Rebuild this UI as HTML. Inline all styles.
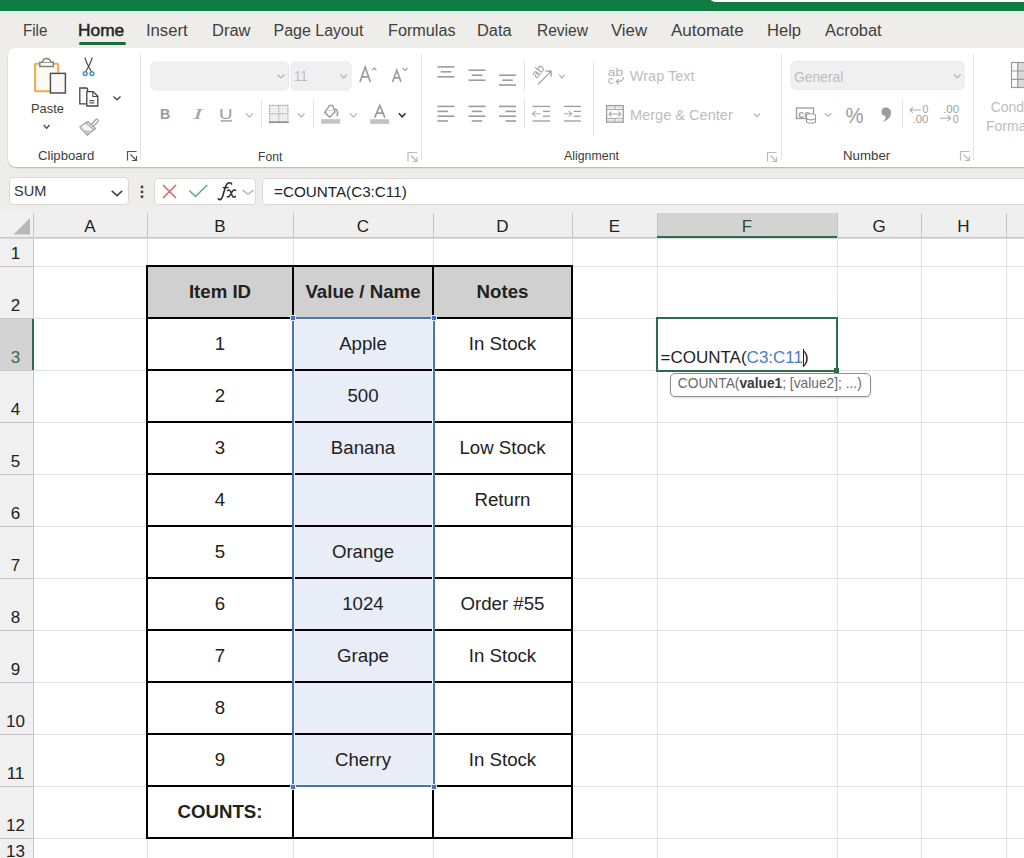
<!DOCTYPE html><html><head><meta charset="utf-8"><style>
*{margin:0;padding:0;box-sizing:border-box}
html,body{width:1024px;height:858px;overflow:hidden;background:#eeede9;font-family:"Liberation Sans",sans-serif;}
.a{position:absolute}
.t{position:absolute;white-space:nowrap;line-height:1}
</style></head><body>

<div class="a" style="left:0;top:0;width:1024px;height:11px;background:#107c41"></div>
<div class="a" style="left:0;top:11px;width:1024px;height:2px;background:#e4f3e8"></div>
<div class="a" style="left:710px;top:-8px;width:330px;height:10px;background:#fff;border-radius:5px"></div>
<div class="a" style="left:8px;top:48px;width:1030px;height:119px;background:#fff;border-radius:8px;box-shadow:0 1px 1.5px rgba(0,0,0,.25)"></div>
<div class="a" style="left:9px;top:177px;width:120px;height:28px;background:#fff;border:1px solid #dcdad8;border-radius:4px"></div>
<div class="a" style="left:154px;top:178px;width:102px;height:27px;background:#fff;border:1px solid #dcdad8;border-radius:4px"></div>
<div class="a" style="left:262px;top:178px;width:780px;height:27px;background:#fff;border:1px solid #dcdad8;border-radius:4px"></div>
<div class="a" style="left:0;top:213px;width:1024px;height:645px;background:#fff"></div>
<div class="a" style="left:0;top:207px;width:1024px;height:30px;background:#efefef"></div>
<div class="a" style="left:0;top:213px;width:33px;height:645px;background:#f0f0f0"></div>
<div class="a" style="left:657px;top:213px;width:180px;height:24px;background:#d3d3d3"></div>
<div class="a" style="left:657px;top:236px;width:180px;height:2px;background:#2b6e4b"></div>
<div class="a" style="left:0;top:319px;width:33px;height:51px;background:#d3d3d3"></div>
<div class="a" style="left:32px;top:319px;width:2px;height:51px;background:#217346"></div>
<div class="a" style="left:33px;top:266px;width:1000px;height:1px;background:#e1e1e1"></div>
<div class="a" style="left:0;top:266px;width:33px;height:1px;background:#c6c6c6"></div>
<div class="a" style="left:33px;top:318px;width:1000px;height:1px;background:#e1e1e1"></div>
<div class="a" style="left:0;top:318px;width:33px;height:1px;background:#c6c6c6"></div>
<div class="a" style="left:33px;top:370px;width:1000px;height:1px;background:#e1e1e1"></div>
<div class="a" style="left:0;top:370px;width:33px;height:1px;background:#c6c6c6"></div>
<div class="a" style="left:33px;top:422px;width:1000px;height:1px;background:#e1e1e1"></div>
<div class="a" style="left:0;top:422px;width:33px;height:1px;background:#c6c6c6"></div>
<div class="a" style="left:33px;top:474px;width:1000px;height:1px;background:#e1e1e1"></div>
<div class="a" style="left:0;top:474px;width:33px;height:1px;background:#c6c6c6"></div>
<div class="a" style="left:33px;top:526px;width:1000px;height:1px;background:#e1e1e1"></div>
<div class="a" style="left:0;top:526px;width:33px;height:1px;background:#c6c6c6"></div>
<div class="a" style="left:33px;top:578px;width:1000px;height:1px;background:#e1e1e1"></div>
<div class="a" style="left:0;top:578px;width:33px;height:1px;background:#c6c6c6"></div>
<div class="a" style="left:33px;top:630px;width:1000px;height:1px;background:#e1e1e1"></div>
<div class="a" style="left:0;top:630px;width:33px;height:1px;background:#c6c6c6"></div>
<div class="a" style="left:33px;top:682px;width:1000px;height:1px;background:#e1e1e1"></div>
<div class="a" style="left:0;top:682px;width:33px;height:1px;background:#c6c6c6"></div>
<div class="a" style="left:33px;top:734px;width:1000px;height:1px;background:#e1e1e1"></div>
<div class="a" style="left:0;top:734px;width:33px;height:1px;background:#c6c6c6"></div>
<div class="a" style="left:33px;top:786px;width:1000px;height:1px;background:#e1e1e1"></div>
<div class="a" style="left:0;top:786px;width:33px;height:1px;background:#c6c6c6"></div>
<div class="a" style="left:33px;top:838px;width:1000px;height:1px;background:#e1e1e1"></div>
<div class="a" style="left:0;top:838px;width:33px;height:1px;background:#c6c6c6"></div>
<div class="a" style="left:147px;top:238px;width:1px;height:700px;background:#e1e1e1"></div>
<div class="a" style="left:147px;top:213px;width:1px;height:24px;background:#c6c6c6"></div>
<div class="a" style="left:293px;top:238px;width:1px;height:700px;background:#e1e1e1"></div>
<div class="a" style="left:293px;top:213px;width:1px;height:24px;background:#c6c6c6"></div>
<div class="a" style="left:433px;top:238px;width:1px;height:700px;background:#e1e1e1"></div>
<div class="a" style="left:433px;top:213px;width:1px;height:24px;background:#c6c6c6"></div>
<div class="a" style="left:572px;top:238px;width:1px;height:700px;background:#e1e1e1"></div>
<div class="a" style="left:572px;top:213px;width:1px;height:24px;background:#c6c6c6"></div>
<div class="a" style="left:657px;top:238px;width:1px;height:700px;background:#e1e1e1"></div>
<div class="a" style="left:657px;top:213px;width:1px;height:24px;background:#c6c6c6"></div>
<div class="a" style="left:837px;top:238px;width:1px;height:700px;background:#e1e1e1"></div>
<div class="a" style="left:837px;top:213px;width:1px;height:24px;background:#c6c6c6"></div>
<div class="a" style="left:921px;top:238px;width:1px;height:700px;background:#e1e1e1"></div>
<div class="a" style="left:921px;top:213px;width:1px;height:24px;background:#c6c6c6"></div>
<div class="a" style="left:1006px;top:238px;width:1px;height:700px;background:#e1e1e1"></div>
<div class="a" style="left:1006px;top:213px;width:1px;height:24px;background:#c6c6c6"></div>
<div class="a" style="left:0;top:237px;width:1024px;height:1px;background:#c4c4c4"></div>
<div class="a" style="left:0;top:238px;width:1024px;height:1px;background:#dcdcdc"></div>
<div class="a" style="left:33px;top:213px;width:1px;height:700px;background:#c6c6c6"></div>
<div class="a" style="left:657px;top:236px;width:180px;height:2px;background:#2b6e4b"></div>
<div class="a" style="left:32px;top:319px;width:2px;height:51px;background:#2b6e4b"></div>
<svg class="a" style="left:0;top:212px" width="33" height="26"><path d="M13.5 22.5 L30 22.5 L30 6 Z" fill="#b8b8b8"/></svg>
<div class="t" style="left:70.0px;width:40px;text-align:center;top:218px;font-size:17px;color:#222">A</div>
<div class="t" style="left:200.0px;width:40px;text-align:center;top:218px;font-size:17px;color:#222">B</div>
<div class="t" style="left:343.0px;width:40px;text-align:center;top:218px;font-size:17px;color:#222">C</div>
<div class="t" style="left:482.5px;width:40px;text-align:center;top:218px;font-size:17px;color:#222">D</div>
<div class="t" style="left:594.5px;width:40px;text-align:center;top:218px;font-size:17px;color:#222">E</div>
<div class="t" style="left:727.0px;width:40px;text-align:center;top:218px;font-size:17px;color:#2a4d39">F</div>
<div class="t" style="left:859.0px;width:40px;text-align:center;top:218px;font-size:17px;color:#222">G</div>
<div class="t" style="left:943.5px;width:40px;text-align:center;top:218px;font-size:17px;color:#222">H</div>
<div class="t" style="left:-0.5px;width:32px;text-align:center;top:245px;font-size:17px;color:#222">1</div>
<div class="t" style="left:-0.5px;width:32px;text-align:center;top:297px;font-size:17px;color:#222">2</div>
<div class="t" style="left:-0.5px;width:32px;text-align:center;top:349px;font-size:17px;color:#3a6b4f">3</div>
<div class="t" style="left:-0.5px;width:32px;text-align:center;top:401px;font-size:17px;color:#222">4</div>
<div class="t" style="left:-0.5px;width:32px;text-align:center;top:453px;font-size:17px;color:#222">5</div>
<div class="t" style="left:-0.5px;width:32px;text-align:center;top:505px;font-size:17px;color:#222">6</div>
<div class="t" style="left:-0.5px;width:32px;text-align:center;top:557px;font-size:17px;color:#222">7</div>
<div class="t" style="left:-0.5px;width:32px;text-align:center;top:609px;font-size:17px;color:#222">8</div>
<div class="t" style="left:-0.5px;width:32px;text-align:center;top:661px;font-size:17px;color:#222">9</div>
<div class="t" style="left:-0.5px;width:32px;text-align:center;top:713px;font-size:17px;color:#222">10</div>
<div class="t" style="left:-0.5px;width:32px;text-align:center;top:765px;font-size:17px;color:#222">11</div>
<div class="t" style="left:-0.5px;width:32px;text-align:center;top:817px;font-size:17px;color:#222">12</div>
<div class="t" style="left:-0.5px;width:32px;text-align:center;top:843px;font-size:17px;color:#222">13</div>
<div class="a" style="left:147px;top:266px;width:425px;height:52px;background:#d0d0d0"></div>
<div class="a" style="left:294px;top:318px;width:139px;height:468px;background:#e8edf7"></div>
<div class="a" style="left:146px;top:265px;width:2px;height:574px;background:#000"></div>
<div class="a" style="left:292px;top:265px;width:2px;height:574px;background:#000"></div>
<div class="a" style="left:432px;top:265px;width:2px;height:574px;background:#000"></div>
<div class="a" style="left:571px;top:265px;width:2px;height:574px;background:#000"></div>
<div class="a" style="left:146px;top:265px;width:427px;height:2px;background:#000"></div>
<div class="a" style="left:146px;top:317px;width:427px;height:2px;background:#000"></div>
<div class="a" style="left:146px;top:369px;width:427px;height:2px;background:#000"></div>
<div class="a" style="left:146px;top:421px;width:427px;height:2px;background:#000"></div>
<div class="a" style="left:146px;top:473px;width:427px;height:2px;background:#000"></div>
<div class="a" style="left:146px;top:525px;width:427px;height:2px;background:#000"></div>
<div class="a" style="left:146px;top:577px;width:427px;height:2px;background:#000"></div>
<div class="a" style="left:146px;top:629px;width:427px;height:2px;background:#000"></div>
<div class="a" style="left:146px;top:681px;width:427px;height:2px;background:#000"></div>
<div class="a" style="left:146px;top:733px;width:427px;height:2px;background:#000"></div>
<div class="a" style="left:146px;top:785px;width:427px;height:2px;background:#000"></div>
<div class="a" style="left:146px;top:837px;width:427px;height:2px;background:#000"></div>
<div class="a" style="left:292px;top:317px;width:143px;height:470px;border:2px solid #4b74ae;box-shadow:inset 0 0 0 1px #f2f5fa"></div>
<div class="a" style="left:290px;top:315px;width:6px;height:6px;background:#4b74ae;border:1px solid #dfe8f5"></div>
<div class="a" style="left:431px;top:315px;width:6px;height:6px;background:#4b74ae;border:1px solid #dfe8f5"></div>
<div class="a" style="left:290px;top:784px;width:6px;height:6px;background:#4b74ae;border:1px solid #dfe8f5"></div>
<div class="a" style="left:431px;top:784px;width:6px;height:6px;background:#4b74ae;border:1px solid #dfe8f5"></div>
<div class="t" style="left:147px;width:146px;text-align:center;top:283px;font-size:18.67px;font-weight:bold;color:#222">Item ID</div>
<div class="t" style="left:293px;width:140px;text-align:center;top:283px;font-size:18.67px;font-weight:bold;color:#222">Value / Name</div>
<div class="t" style="left:433px;width:139px;text-align:center;top:283px;font-size:18.67px;font-weight:bold;color:#222">Notes</div>
<div class="t" style="left:147px;width:146px;text-align:center;top:335px;font-size:18.67px;font-weight:normal;color:#222">1</div>
<div class="t" style="left:293px;width:140px;text-align:center;top:335px;font-size:18.67px;font-weight:normal;color:#222">Apple</div>
<div class="t" style="left:433px;width:139px;text-align:center;top:335px;font-size:18.67px;font-weight:normal;color:#222">In Stock</div>
<div class="t" style="left:147px;width:146px;text-align:center;top:387px;font-size:18.67px;font-weight:normal;color:#222">2</div>
<div class="t" style="left:293px;width:140px;text-align:center;top:387px;font-size:18.67px;font-weight:normal;color:#222">500</div>
<div class="t" style="left:147px;width:146px;text-align:center;top:439px;font-size:18.67px;font-weight:normal;color:#222">3</div>
<div class="t" style="left:293px;width:140px;text-align:center;top:439px;font-size:18.67px;font-weight:normal;color:#222">Banana</div>
<div class="t" style="left:433px;width:139px;text-align:center;top:439px;font-size:18.67px;font-weight:normal;color:#222">Low Stock</div>
<div class="t" style="left:147px;width:146px;text-align:center;top:491px;font-size:18.67px;font-weight:normal;color:#222">4</div>
<div class="t" style="left:433px;width:139px;text-align:center;top:491px;font-size:18.67px;font-weight:normal;color:#222">Return</div>
<div class="t" style="left:147px;width:146px;text-align:center;top:543px;font-size:18.67px;font-weight:normal;color:#222">5</div>
<div class="t" style="left:293px;width:140px;text-align:center;top:543px;font-size:18.67px;font-weight:normal;color:#222">Orange</div>
<div class="t" style="left:147px;width:146px;text-align:center;top:595px;font-size:18.67px;font-weight:normal;color:#222">6</div>
<div class="t" style="left:293px;width:140px;text-align:center;top:595px;font-size:18.67px;font-weight:normal;color:#222">1024</div>
<div class="t" style="left:433px;width:139px;text-align:center;top:595px;font-size:18.67px;font-weight:normal;color:#222">Order #55</div>
<div class="t" style="left:147px;width:146px;text-align:center;top:647px;font-size:18.67px;font-weight:normal;color:#222">7</div>
<div class="t" style="left:293px;width:140px;text-align:center;top:647px;font-size:18.67px;font-weight:normal;color:#222">Grape</div>
<div class="t" style="left:433px;width:139px;text-align:center;top:647px;font-size:18.67px;font-weight:normal;color:#222">In Stock</div>
<div class="t" style="left:147px;width:146px;text-align:center;top:699px;font-size:18.67px;font-weight:normal;color:#222">8</div>
<div class="t" style="left:147px;width:146px;text-align:center;top:751px;font-size:18.67px;font-weight:normal;color:#222">9</div>
<div class="t" style="left:293px;width:140px;text-align:center;top:751px;font-size:18.67px;font-weight:normal;color:#222">Cherry</div>
<div class="t" style="left:433px;width:139px;text-align:center;top:751px;font-size:18.67px;font-weight:normal;color:#222">In Stock</div>
<div class="t" style="left:147px;width:146px;text-align:center;top:803px;font-size:18.67px;font-weight:bold;color:#222">COUNTS:</div>
<div class="a" style="left:656px;top:317px;width:182px;height:55px;border:2px solid #2b6e4b"></div>
<div class="a" style="left:834px;top:368px;width:5px;height:5px;background:#2b6e4b"></div>
<div class="t" style="left:660.5px;top:349px;font-size:17px;color:#1e1e1e">=COUNTA(<span style="color:#4a7cc0">C3:C11</span>)</div>
<div class="a" style="left:803px;top:349px;width:1.3px;height:18px;background:#222"></div>
<div class="a" style="left:670px;top:373px;width:201px;height:24px;background:#fff;border:1px solid #909090;border-radius:5px;box-shadow:0 1px 2px rgba(0,0,0,.15)"></div>
<div class="t" style="left:677.8px;top:377.4px;font-size:13.75px;color:#6a6a6a">COUNTA(<b style="color:#3a3a3a">value1</b>; [value2]; ...)</div>
<div class="t" style="left:22.79px;top:22.86px;font-size:16px;font-family:'Liberation Sans',sans-serif;font-weight:normal;font-style:normal;color:#404040;transform:scaleX(0.9470);transform-origin:0 0;">File</div>
<div class="t" style="left:78.11px;top:22.86px;font-size:16px;font-family:'Liberation Sans',sans-serif;font-weight:normal;font-style:normal;color:#242424;transform:scaleX(1.0827);transform-origin:0 0;-webkit-text-stroke:0.45px #242424;">Home</div>
<div class="t" style="left:146.00px;top:22.86px;font-size:16px;font-family:'Liberation Sans',sans-serif;font-weight:normal;font-style:normal;color:#404040;transform:scaleX(1.0395);transform-origin:0 0;">Insert</div>
<div class="t" style="left:211.68px;top:22.86px;font-size:16px;font-family:'Liberation Sans',sans-serif;font-weight:normal;font-style:normal;color:#404040;transform:scaleX(1.0301);transform-origin:0 0;">Draw</div>
<div class="t" style="left:273.47px;top:22.86px;font-size:16px;font-family:'Liberation Sans',sans-serif;font-weight:normal;font-style:normal;color:#404040;">Page Layout</div>
<div class="t" style="left:387.70px;top:22.86px;font-size:16px;font-family:'Liberation Sans',sans-serif;font-weight:normal;font-style:normal;color:#404040;transform:scaleX(1.0134);transform-origin:0 0;">Formulas</div>
<div class="t" style="left:477.19px;top:22.86px;font-size:16px;font-family:'Liberation Sans',sans-serif;font-weight:normal;font-style:normal;color:#404040;transform:scaleX(1.0237);transform-origin:0 0;">Data</div>
<div class="t" style="left:536.76px;top:22.86px;font-size:16px;font-family:'Liberation Sans',sans-serif;font-weight:normal;font-style:normal;color:#404040;transform:scaleX(0.9698);transform-origin:0 0;">Review</div>
<div class="t" style="left:611.16px;top:22.86px;font-size:16px;font-family:'Liberation Sans',sans-serif;font-weight:normal;font-style:normal;color:#404040;transform:scaleX(1.0467);transform-origin:0 0;">View</div>
<div class="t" style="left:670.50px;top:22.86px;font-size:16px;font-family:'Liberation Sans',sans-serif;font-weight:normal;font-style:normal;color:#404040;transform:scaleX(1.0626);transform-origin:0 0;">Automate</div>
<div class="t" style="left:766.68px;top:22.86px;font-size:16px;font-family:'Liberation Sans',sans-serif;font-weight:normal;font-style:normal;color:#404040;transform:scaleX(1.0336);transform-origin:0 0;">Help</div>
<div class="t" style="left:824.50px;top:22.86px;font-size:16px;font-family:'Liberation Sans',sans-serif;font-weight:normal;font-style:normal;color:#404040;transform:scaleX(1.0265);transform-origin:0 0;">Acrobat</div>
<div class="a" style="left:79px;top:42px;width:47px;height:3px;background:#1d6a3f;border-radius:2px"></div>
<svg class="a" style="left:0;top:0" width="1024" height="210"><line x1="140.5" y1="54" x2="140.5" y2="160" stroke="#e2e2e2" stroke-width="1"/><line x1="421.5" y1="54" x2="421.5" y2="160" stroke="#e2e2e2" stroke-width="1"/><line x1="781.5" y1="54" x2="781.5" y2="160" stroke="#e2e2e2" stroke-width="1"/><line x1="973.5" y1="54" x2="973.5" y2="160" stroke="#e2e2e2" stroke-width="1"/><line x1="261.5" y1="100" x2="261.5" y2="128" stroke="#e2e2e2" stroke-width="1"/><line x1="313.5" y1="100" x2="313.5" y2="128" stroke="#e2e2e2" stroke-width="1"/><line x1="524.5" y1="61" x2="524.5" y2="91" stroke="#e2e2e2" stroke-width="1"/><line x1="524.5" y1="99" x2="524.5" y2="128" stroke="#e2e2e2" stroke-width="1"/><line x1="593.5" y1="61" x2="593.5" y2="136" stroke="#e2e2e2" stroke-width="1"/><line x1="902.5" y1="100" x2="902.5" y2="128" stroke="#e2e2e2" stroke-width="1"/><rect x="151" y="62" width="137.5" height="28" rx="5" fill="#f0f0f0" stroke="#e8e8e8"/><rect x="291" y="62" width="60" height="28" rx="5" fill="#f0f0f0" stroke="#e8e8e8"/><rect x="791" y="61.5" width="173" height="28" rx="5" fill="#f0f0f0" stroke="#e8e8e8"/><polyline points="277.5,74.5 281.0,78 284.5,74.5" fill="none" stroke="#b4b4b4" stroke-width="1.2"/><polyline points="340.5,74.5 343.75,78 347,74.5" fill="none" stroke="#b4b4b4" stroke-width="1.2"/><polyline points="954,74.5 957.25,77.8 960.5,74.5" fill="none" stroke="#b4b4b4" stroke-width="1.2"/><polyline points="43.8,125 46.65,128.3 49.5,125" fill="none" stroke="#444" stroke-width="1.3"/><polyline points="113.5,96.5 117.0,99.8 120.5,96.5" fill="none" stroke="#444" stroke-width="1.3"/><polyline points="246,113.5 249.5,117 253,113.5" fill="none" stroke="#b4b4b4" stroke-width="1.2"/><polyline points="298,113.5 301.25,117 304.5,113.5" fill="none" stroke="#b4b4b4" stroke-width="1.2"/><polyline points="350,113.5 353.5,117 357,113.5" fill="none" stroke="#b4b4b4" stroke-width="1.2"/><polyline points="398.8,113.2 402.15,116.8 405.5,113.2" fill="none" stroke="#333" stroke-width="1.6"/><polyline points="559,74.6 562.0,78 565,74.6" fill="none" stroke="#b4b4b4" stroke-width="1.2"/><polyline points="754,113.5 757.0,116.8 760,113.5" fill="none" stroke="#b4b4b4" stroke-width="1.2"/><polyline points="825,113.3 828.25,116.5 831.5,113.3" fill="none" stroke="#b4b4b4" stroke-width="1.2"/><path d="M127.5 160.5 V151.5 H136.5" fill="none" stroke="#555" stroke-width="1.2"/><path d="M130.5 154.5 L136.5 160.5 M136.5 156 V160.5 H132" fill="none" stroke="#555" stroke-width="1.2"/><path d="M408.0 161.5 V152.5 H417.0" fill="none" stroke="#bbb" stroke-width="1.2"/><path d="M411.0 155.5 L417.0 161.5 M417.0 157 V161.5 H412.5" fill="none" stroke="#bbb" stroke-width="1.2"/><path d="M767.5 161.5 V152.5 H776.5" fill="none" stroke="#bbb" stroke-width="1.2"/><path d="M770.5 155.5 L776.5 161.5 M776.5 157 V161.5 H772" fill="none" stroke="#bbb" stroke-width="1.2"/><path d="M960.5 160.5 V151.5 H969.5" fill="none" stroke="#bbb" stroke-width="1.2"/><path d="M963.5 154.5 L969.5 160.5 M969.5 156 V160.5 H965" fill="none" stroke="#bbb" stroke-width="1.2"/><rect x="35.1" y="63.7" width="23.1" height="27.6" rx="1" fill="#fffaf2" stroke="#eeab50" stroke-width="2.1"/><path d="M39.8 62.3 H53.3 V66.6 H39.8 Z" fill="#fff" stroke="#808080" stroke-width="1.5"/><path d="M42.6 62.3 Q43 58.4 46.6 58.4 Q50.2 58.4 50.6 62.3" fill="#fff" stroke="#808080" stroke-width="1.5"/><rect x="50.4" y="73.4" width="15" height="19.6" fill="#f8f8f8" stroke="#505050" stroke-width="1.5"/><path d="M84.8 57.5 Q86.5 63 88.6 66.5 Q90.3 69.5 91.2 71.6 M92.3 57.5 Q90.6 63 88.6 66.5 Q86.9 69.5 85.9 71.6" stroke="#4a4a4a" stroke-width="1.15" fill="none"/><circle cx="85.2" cy="73.6" r="1.9" fill="#fff" stroke="#3d93c0" stroke-width="1.5"/><circle cx="91.9" cy="73.6" r="1.9" fill="#fff" stroke="#3d93c0" stroke-width="1.5"/><path d="M87.6 91.6 V89.6 Q87.6 88 86 88 H79.8 V103.8 H86.6" fill="none" stroke="#444" stroke-width="1.3"/><path d="M86.8 91.6 H93.2 L97.8 96.2 V106 H86.8 Z" fill="#fff" stroke="#444" stroke-width="1.3" stroke-linejoin="round"/><path d="M92.9 91.6 V96.5 H97.8" fill="none" stroke="#444" stroke-width="1.1"/><path d="M89.4 100.6 H94.4 M89.4 102.9 H94.4" stroke="#555" stroke-width="1.1"/><path d="M91.3 124.3 L95.6 119.7 Q96.9 118.6 97.9 119.6 Q98.8 120.6 97.7 121.8 L93.4 126.4" fill="#f6f6f6" stroke="#a2a2a2" stroke-width="1.3"/><path d="M79.9 127 Q84.2 123.6 87.9 121.6 L95.6 128.4 Q91.2 131.6 87.4 135.2 Q83.7 131.2 79.9 127 Z" fill="#f4f4f4" stroke="#a2a2a2" stroke-width="1.3" stroke-linejoin="round"/><path d="M86.6 123.2 L94.2 130" stroke="#a8a8a8" stroke-width="1.2"/><path d="M82.2 129.2 Q87.5 131 92.6 130.8 Q89.8 133 87.5 134.6 Q84.5 131.8 82.2 129.2 Z" fill="#c6c6c6"/><path d="M360 82 L365.2 67 L370.4 82 M362 76.8 H368.4" fill="none" stroke="#9c9c9c" stroke-width="1.7"/><polyline points="372.2,70.4 374.3,67.8 376.4,70.4" fill="none" stroke="#9c9c9c" stroke-width="1.1"/><path d="M392.6 82 L396.8 70.2 L401 82 M394.2 77.8 H399.4" fill="none" stroke="#9c9c9c" stroke-width="1.7"/><polyline points="402.6,67.8 405.1,70.4 407.6,67.8" fill="none" stroke="#9c9c9c" stroke-width="1.1"/><rect x="220.7" y="120.2" width="11.2" height="1.4" fill="#9c9c9c"/><rect x="269.6" y="105.4" width="18.4" height="16.6" fill="#eeeeee"/><path d="M269.6 105.4 H288 M269.6 105.4 V122 M288 105.4 V122 M278.8 105.4 V122 M269.6 113.7 H288" fill="none" stroke="#a4a4a4" stroke-width="1.1" stroke-dasharray="1.6 0.9"/><rect x="269" y="121.3" width="19.6" height="1.8" fill="#929292"/><path d="M329.6 105.6 L332.6 105.6 L335 112 L329.7 117.2 L324.6 112.4 Z" fill="none" stroke="#9c9c9c" stroke-width="1.5" stroke-linejoin="round"/><path d="M327.5 110.5 L332.5 110.5" stroke="#cfcfcf" stroke-width="1"/><path d="M334.2 109.6 Q337.8 108.6 337.6 113 L337.2 116.2" fill="none" stroke="#9c9c9c" stroke-width="1.6"/><rect x="321.2" y="119.1" width="18.9" height="4.6" fill="#c2c2c2"/><path d="M374.7 117.7 L379.8 105.4 L384.9 117.7 M376.6 113.2 H383" fill="none" stroke="#9c9c9c" stroke-width="1.7"/><rect x="370.2" y="119.2" width="19" height="4.7" fill="#c2c2c2"/><line x1="437.5" y1="66.9" x2="454.5" y2="66.9" stroke="#9c9c9c" stroke-width="1.6"/><line x1="440.73" y1="71.8" x2="451.27" y2="71.8" stroke="#9c9c9c" stroke-width="1.6"/><line x1="437.5" y1="76.8" x2="454.5" y2="76.8" stroke="#9c9c9c" stroke-width="1.6"/><line x1="468.5" y1="70.2" x2="485.5" y2="70.2" stroke="#9c9c9c" stroke-width="1.6"/><line x1="471.73" y1="75.2" x2="482.27" y2="75.2" stroke="#9c9c9c" stroke-width="1.6"/><line x1="468.5" y1="80.2" x2="485.5" y2="80.2" stroke="#9c9c9c" stroke-width="1.6"/><line x1="499" y1="75.2" x2="516" y2="75.2" stroke="#9c9c9c" stroke-width="1.6"/><line x1="502.23" y1="80.2" x2="512.77" y2="80.2" stroke="#9c9c9c" stroke-width="1.6"/><line x1="499" y1="85" x2="516" y2="85" stroke="#9c9c9c" stroke-width="1.6"/><line x1="437.5" y1="106.4" x2="454.5" y2="106.4" stroke="#9c9c9c" stroke-width="1.6"/><line x1="437.5" y1="111.4" x2="448.04" y2="111.4" stroke="#9c9c9c" stroke-width="1.6"/><line x1="437.5" y1="116.2" x2="454.5" y2="116.2" stroke="#9c9c9c" stroke-width="1.6"/><line x1="437.5" y1="121" x2="448.04" y2="121" stroke="#9c9c9c" stroke-width="1.6"/><line x1="468.5" y1="106.4" x2="485.5" y2="106.4" stroke="#9c9c9c" stroke-width="1.6"/><line x1="471.73" y1="111.4" x2="482.27" y2="111.4" stroke="#9c9c9c" stroke-width="1.6"/><line x1="468.5" y1="116.2" x2="485.5" y2="116.2" stroke="#9c9c9c" stroke-width="1.6"/><line x1="471.73" y1="121" x2="482.27" y2="121" stroke="#9c9c9c" stroke-width="1.6"/><line x1="499" y1="106.4" x2="516" y2="106.4" stroke="#9c9c9c" stroke-width="1.6"/><line x1="505.46" y1="111.4" x2="516" y2="111.4" stroke="#9c9c9c" stroke-width="1.6"/><line x1="499" y1="116.2" x2="516" y2="116.2" stroke="#9c9c9c" stroke-width="1.6"/><line x1="505.46" y1="121" x2="516" y2="121" stroke="#9c9c9c" stroke-width="1.6"/><line x1="532.5" y1="106.4" x2="550" y2="106.4" stroke="#9c9c9c" stroke-width="1.3"/><line x1="532.5" y1="121" x2="550" y2="121" stroke="#9c9c9c" stroke-width="1.3"/><line x1="543" y1="111.4" x2="550" y2="111.4" stroke="#9c9c9c" stroke-width="1.3"/><line x1="543" y1="116.2" x2="550" y2="116.2" stroke="#9c9c9c" stroke-width="1.3"/><path d="M540.5 113.8 H532.5 M535.5 111 L532.5 113.8 L535.5 116.6" fill="none" stroke="#b0b0b0" stroke-width="1.1"/><line x1="563.8" y1="106.4" x2="580.8" y2="106.4" stroke="#9c9c9c" stroke-width="1.3"/><line x1="563.8" y1="121" x2="580.8" y2="121" stroke="#9c9c9c" stroke-width="1.3"/><line x1="573.8" y1="111.4" x2="580.8" y2="111.4" stroke="#9c9c9c" stroke-width="1.3"/><line x1="573.8" y1="116.2" x2="580.8" y2="116.2" stroke="#9c9c9c" stroke-width="1.3"/><path d="M563.8 113.8 H571.8 M568.8 111 L571.8 113.8 L568.8 116.6" fill="none" stroke="#b0b0b0" stroke-width="1.1"/><text x="0" y="0" transform="translate(536.8,79) rotate(-52)" font-family="Liberation Sans" font-size="12" fill="#9c9c9c">ab</text><path d="M538 84.3 L551 71.3 M545.5 71.2 H551.1 V76.8" fill="none" stroke="#9c9c9c" stroke-width="1.2"/><text x="607.8" y="75.8" font-family="Liberation Sans" font-size="11.5" fill="#b0b0b0" textLength="15.2" lengthAdjust="spacingAndGlyphs">ab</text><text x="607.8" y="84.4" font-family="Liberation Sans" font-size="11.5" fill="#b0b0b0">c</text><path d="M623.6 77 Q623.6 81.6 616.4 81.8 M618.6 79.2 L616.2 81.8 L618.6 84.4" fill="none" stroke="#b0b0b0" stroke-width="1.2"/><rect x="606.6" y="105.6" width="16.6" height="16.6" fill="none" stroke="#9c9c9c" stroke-width="1.3"/><path d="M607 109.6 H622.8 M607 118.4 H622.8" stroke="#a8a8a8" stroke-width="1"/><path d="M607.5 107.6 H622.5 M607.5 120.3 H622.5" stroke="#cfcfcf" stroke-width="1.6" stroke-dasharray="1.5 0.8"/><path d="M614.9 106 V109.5 M614.9 118.5 V122" stroke="#b0b0b0" stroke-width="1"/><path d="M609.2 114 H620.6 M611.4 111.6 L609 114 L611.4 116.4 M618.4 111.6 L620.8 114 L618.4 116.4" fill="none" stroke="#a8a8a8" stroke-width="1.1"/><rect x="796.5" y="108" width="17" height="10.5" fill="none" stroke="#9c9c9c" stroke-width="1.3"/><text x="798.3" y="118" font-family="Liberation Sans" font-size="10.5" font-weight="bold" fill="#a0a0a0">cc</text><ellipse cx="811" cy="115.5" rx="4.5" ry="1.8" fill="#fff" stroke="#9c9c9c" stroke-width="1.1"/><path d="M806.5 115.5 V122 Q811 124.5 815.5 122 V115.5 M806.5 118.8 Q811 121 815.5 118.8" fill="#fff" stroke="#9c9c9c" stroke-width="1.1"/><text x="845.5" y="122.5" font-family="Liberation Sans" font-size="22" fill="#9c9c9c" textLength="18" lengthAdjust="spacingAndGlyphs">%</text><path d="M885.5 107.5 Q891 107.5 891 113 Q891 119 883 122 Q887 117 885 116 Q881 115 881.5 111.5 Q882 107.5 885.5 107.5 Z" fill="#9c9c9c"/><text x="922.4" y="112.9" font-family="Liberation Sans" font-size="11.2" fill="#9e9e9e" textLength="6" lengthAdjust="spacingAndGlyphs">0</text><text x="912.6" y="122.8" font-family="Liberation Sans" font-size="11.2" fill="#9e9e9e" textLength="15.8" lengthAdjust="spacingAndGlyphs">.00</text><path d="M920.8 110 H910 M912.8 107.2 L910 110 L912.8 112.8" fill="none" stroke="#ababab" stroke-width="1.1"/><text x="943" y="112.9" font-family="Liberation Sans" font-size="11.2" fill="#9e9e9e" textLength="16.2" lengthAdjust="spacingAndGlyphs">.00</text><text x="952.8" y="122.8" font-family="Liberation Sans" font-size="11.2" fill="#9e9e9e" textLength="6" lengthAdjust="spacingAndGlyphs">0</text><path d="M940 118.3 H950.5 M947.7 115.5 L950.5 118.3 L947.7 121.1" fill="none" stroke="#ababab" stroke-width="1.1"/><rect x="1011.5" y="62.5" width="20" height="25" fill="#dadada" stroke="#9a9a9a" stroke-width="1.2"/><rect x="1012.2" y="63.2" width="5.3" height="23.6" fill="#fbfbfb"/><path d="M1011.5 71 H1032 M1011.5 79.3 H1032 M1017.7 62.5 V87.5" stroke="#9a9a9a" stroke-width="1.2"/></svg>
<div class="t" style="left:30.67px;top:101.87px;font-size:13.5px;font-family:'Liberation Sans',sans-serif;font-weight:normal;font-style:normal;color:#3c3c3c;transform:scaleX(0.9541);transform-origin:0 0;">Paste</div>
<div class="t" style="left:38.34px;top:148.70px;font-size:13px;font-family:'Liberation Sans',sans-serif;font-weight:normal;font-style:normal;color:#3c3c3c;transform:scaleX(1.0103);transform-origin:0 0;">Clipboard</div>
<div class="t" style="left:258.03px;top:149.50px;font-size:13px;font-family:'Liberation Sans',sans-serif;font-weight:normal;font-style:normal;color:#3c3c3c;transform:scaleX(0.9319);transform-origin:0 0;">Font</div>
<div class="t" style="left:563.80px;top:149.20px;font-size:13px;font-family:'Liberation Sans',sans-serif;font-weight:normal;font-style:normal;color:#3c3c3c;transform:scaleX(0.9511);transform-origin:0 0;">Alignment</div>
<div class="t" style="left:843.34px;top:149.40px;font-size:13px;font-family:'Liberation Sans',sans-serif;font-weight:normal;font-style:normal;color:#3c3c3c;transform:scaleX(1.0205);transform-origin:0 0;">Number</div>
<div class="t" style="left:294.31px;top:69.43px;font-size:14.5px;font-family:'Liberation Sans',sans-serif;font-weight:normal;font-style:normal;color:#bdbdbd;transform:scaleX(0.9120);transform-origin:0 0;">11</div>
<div class="t" style="left:629.83px;top:69.33px;font-size:14.5px;font-family:'Liberation Sans',sans-serif;font-weight:normal;font-style:normal;color:#bdbdbd;">Wrap Text</div>
<div class="t" style="left:629.54px;top:107.53px;font-size:14.5px;font-family:'Liberation Sans',sans-serif;font-weight:normal;font-style:normal;color:#bdbdbd;transform:scaleX(1.0038);transform-origin:0 0;">Merge &amp; Center</div>
<div class="t" style="left:793.61px;top:70.03px;font-size:14.5px;font-family:'Liberation Sans',sans-serif;font-weight:normal;font-style:normal;color:#bdbdbd;transform:scaleX(0.9563);transform-origin:0 0;">General</div>
<div class="t" style="left:990.65px;top:99.65px;font-size:14px;font-family:'Liberation Sans',sans-serif;font-weight:normal;font-style:normal;color:#bdbdbd;transform:scaleX(1.2088);transform-origin:0 0;transform:none;">Cond</div>
<div class="t" style="left:985.97px;top:118.55px;font-size:14px;font-family:'Liberation Sans',sans-serif;font-weight:normal;font-style:normal;color:#bdbdbd;transform:scaleX(1.1871);transform-origin:0 0;transform:none;">Forma</div>
<div class="t" style="left:160.38px;top:106.10px;font-size:15px;font-family:'Liberation Sans',sans-serif;font-weight:bold;font-style:normal;color:#9a9a9a;transform:scaleX(0.9399);transform-origin:0 0;">B</div>
<div class="t" style="left:192.54px;top:105.68px;font-size:15.5px;font-family:'Liberation Serif',serif;font-weight:normal;font-style:italic;color:#a4a4a4;transform:scaleX(1.8503);transform-origin:0 0;">I</div>
<div class="t" style="left:219.49px;top:106.10px;font-size:15px;font-family:'Liberation Sans',sans-serif;font-weight:normal;font-style:normal;color:#9a9a9a;transform:scaleX(1.2515);transform-origin:0 0;">U</div>
<svg class="a" style="left:0;top:0" width="300" height="210"><polyline points="111.8,190.8 117,195.6 122.2,190.8" fill="none" stroke="#444" stroke-width="1.6"/><circle cx="142" cy="187" r="1.45" fill="#444"/><circle cx="142" cy="191.9" r="1.45" fill="#444"/><circle cx="142" cy="196.8" r="1.45" fill="#444"/><path d="M163 185 L176 198 M176 185 L163 198" stroke="#e0605a" stroke-width="1.5" fill="none"/><polyline points="189.3,190.5 195.5,196.5 207.2,185" fill="none" stroke="#5fa777" stroke-width="1.5"/><polyline points="242.5,190 248,194.2 253.5,190" fill="none" stroke="#aaa" stroke-width="1.2"/></svg>
<svg class="a" style="left:0;top:0" width="300" height="210"><path d="M218.2 198.8 Q219.8 200.8 221.8 198.2 Q222.8 196.5 223.6 193 L225.6 186.6 Q227 182.6 229.8 182.8 Q231.4 183 231.6 184" fill="none" stroke="#2e2e2e" stroke-width="1.6" stroke-linecap="round"/><path d="M222.6 187.6 H228.6" stroke="#2e2e2e" stroke-width="1.3"/><path d="M227.6 190.6 Q229.6 189.2 230.6 191.6 L232.2 195.6 Q233.4 198.2 235.4 196.4 M235.6 190.4 Q234 189.2 232.4 191.4 L229.8 195.4 Q228.6 197.6 227.2 196.6" fill="none" stroke="#2e2e2e" stroke-width="1.5" stroke-linecap="round"/></svg>
<div class="t" style="left:14.14px;top:184.33px;font-size:14.5px;font-family:'Liberation Sans',sans-serif;font-weight:normal;font-style:normal;color:#333;transform:scaleX(1.0040);transform-origin:0 0;">SUM</div>
<div class="t" style="left:274.24px;top:184.30px;font-size:15px;font-family:'Liberation Sans',sans-serif;font-weight:normal;font-style:normal;color:#222;transform:scaleX(1.0155);transform-origin:0 0;">=COUNTA(C3:C11)</div>
</body></html>
